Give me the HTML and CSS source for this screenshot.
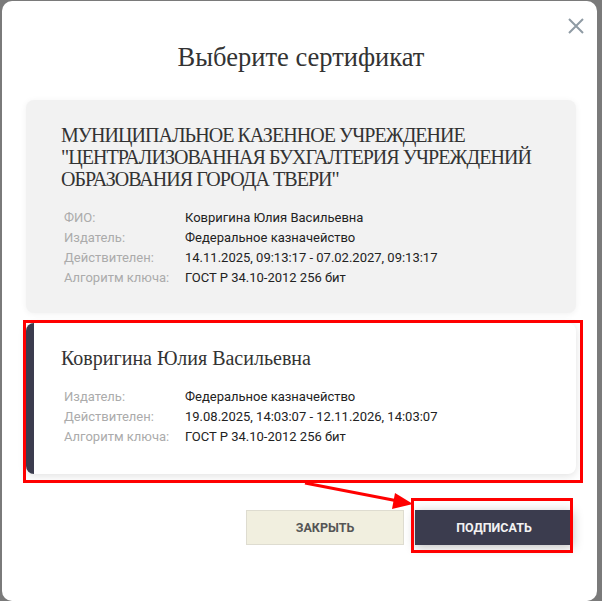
FILE: index.html
```html
<!doctype html>
<html lang="ru">
    <head>
        <meta charset="utf-8">
        <title>Выберите сертификат</title>
        <meta name="viewport" content="width=device-width, initial-scale=1">
        <link rel="stylesheet" href="styles.css">
    </head>
    <body>
        <div class="backdrop">
            <div class="modal">
                <button class="close" type="button" aria-label="Закрыть">
                    <svg width="16" height="16" viewBox="0 0 16 16"><path d="M1 1 L15 15 M15 1 L1 15" stroke="#8f9ba4" stroke-width="2" fill="none"/></svg>
                </button>
                <h1 class="modal-title">Выберите сертификат</h1>

                <div class="cert-list">
                    <div class="cert">
                        <h2 class="cert-title org">МУНИЦИПАЛЬНОЕ КАЗЕННОЕ УЧРЕЖДЕНИЕ "ЦЕНТРАЛИЗОВАННАЯ БУХГАЛТЕРИЯ УЧРЕЖДЕНИЙ ОБРАЗОВАНИЯ ГОРОДА ТВЕРИ"</h2>
                        <div class="cert-info">
                            <span class="lbl">ФИО:</span><span class="val">Ковригина Юлия Васильевна</span>
                            <span class="lbl">Издатель:</span><span class="val">Федеральное казначейство</span>
                            <span class="lbl">Действителен:</span><span class="val">14.11.2025, 09:13:17 - 07.02.2027, 09:13:17</span>
                            <span class="lbl">Алгоритм ключа:</span><span class="val">ГОСТ Р 34.10-2012 256 бит</span>
                        </div>
                    </div>

                    <div class="cert selected">
                        <h2 class="cert-title">Ковригина Юлия Васильевна</h2>
                        <div class="cert-info">
                            <span class="lbl">Издатель:</span><span class="val">Федеральное казначейство</span>
                            <span class="lbl">Действителен:</span><span class="val">19.08.2025, 14:03:07 - 12.11.2026, 14:03:07</span>
                            <span class="lbl">Алгоритм ключа:</span><span class="val">ГОСТ Р 34.10-2012 256 бит</span>
                        </div>
                    </div>
                </div>

                <div class="actions">
                    <button class="btn btn-light" type="button">Закрыть</button>
                    <button class="btn btn-dark" type="button">Подписать</button>
                </div>
            </div>

            <!-- red annotation marks -->
            <div class="mark mark-cert"></div>
            <div class="mark mark-btn"></div>
            <svg class="mark-arrow" width="602" height="601" viewBox="0 0 602 601">
                <line x1="305" y1="482" x2="398" y2="500" stroke="#ff0000" stroke-width="3"/>
                <polygon points="413,503 395,492 392,508" fill="#ff0000"/>
            </svg>
        </div>
    </body>
</html>
```

FILE: styles.css
```css
/* base */
html, body { margin: 0; height: 100%; }
body { background: #7a7a7a; font-family: Roboto, "Liberation Sans", sans-serif; overflow: hidden; }
h1, h2 { margin: 0; font-weight: normal; }
button { font-family: inherit; cursor: pointer; }

.backdrop { position: relative; width: 602px; height: 601px; }

/* modal */
.modal { position: relative; box-sizing: border-box; height: 600px; margin: 1px 5px 0 2px; padding: 40px 21px 0 24px; background: #fff; border-radius: 10px; }
.close { position: absolute; top: 17px; right: 13px; padding: 0; border: 0; background: none; width: 16px; height: 16px; display: flex; }
.modal-title { font-family: "Liberation Serif", serif; font-size: 26.5px; line-height: 32px; color: #333; text-align: center; }

/* certificates */
.cert-list { display: flex; flex-direction: column; gap: 10px; margin-top: 27px; }
.cert { position: relative; padding: 24px 35px 25px; background: #f2f2f2; border-radius: 8px; box-shadow: 0 1px 6px rgba(0, 0, 0, 0.06); }
.cert.selected { background: #fff; border-left: 8px solid #3b3c4e; padding: 24px 35px 27px 27px; box-shadow: 0 2px 8px rgba(0, 0, 0, 0.12); }
.cert-title { font-family: "Liberation Serif", serif; font-size: 20px; line-height: 22px; color: #333; }
.cert-title.org { letter-spacing: -0.95px; }
.cert-info { display: grid; grid-template-columns: 121px auto; margin-top: 18px; padding-left: 3px; font-size: 13px; line-height: 20px; }
.lbl { color: #ababab; }
.val { color: #222; }

/* buttons */
.actions { display: flex; justify-content: flex-end; gap: 11px; margin-top: 36px; padding-right: 3px; }
.btn { width: 158px; height: 35px; font-size: 12.5px; font-weight: bold; text-transform: uppercase; border: 1px solid transparent; }
.btn-light { background: #f1efdf; border-color: #dedcd0; color: #555; }
.btn-dark { background: #3b3c4e; color: #f2f2f2; box-shadow: 0 2px 10px rgba(0, 0, 0, 0.25); }

/* annotations */
.mark { position: absolute; border: 3px solid #ff0000; box-sizing: border-box; pointer-events: none; }
.mark-cert { left: 23px; top: 319px; width: 560px; height: 163px; }
.mark-btn { left: 411px; top: 497px; width: 162px; height: 55px; }
.mark-arrow { position: absolute; left: 0; top: 0; pointer-events: none; }
```
